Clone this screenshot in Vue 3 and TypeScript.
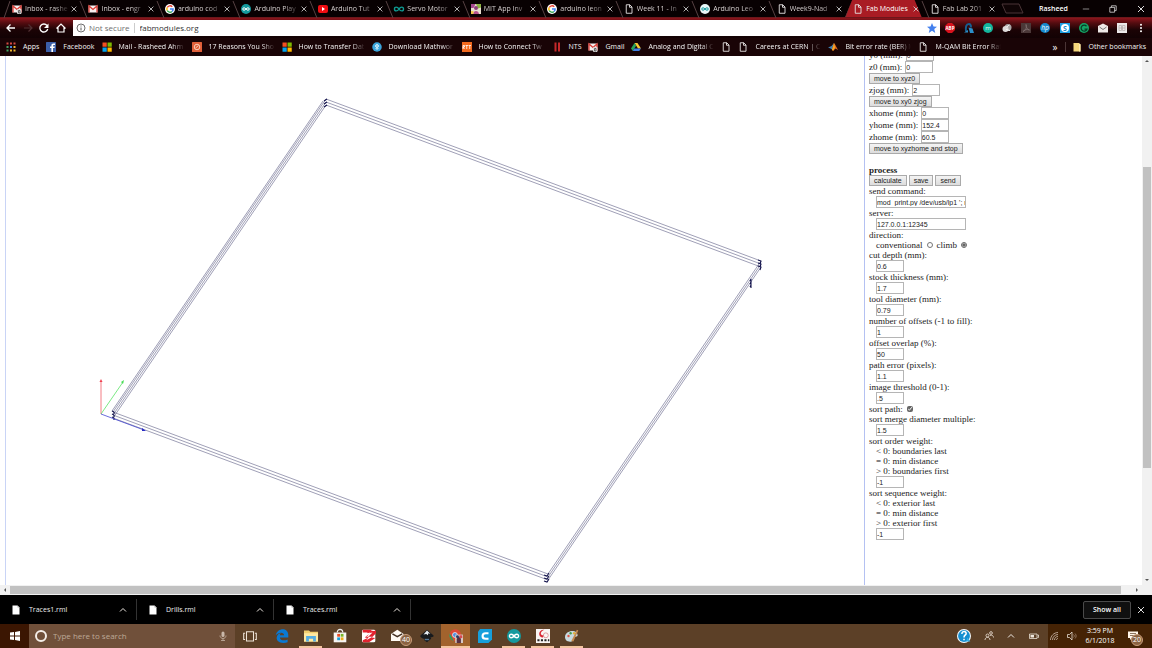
<script setup lang="ts">
import { ref } from 'vue'

interface Tab { icon: string; title: string; active?: boolean }
interface Bookmark { icon: string; label: string; clipped?: boolean }
interface Axis { id: string; label: string; value: string }
interface Setting { id: string; label: string; value: string; wide?: boolean }

const page = '<path d="M4.500 1.500h7l4.500 4.500v12.500h-11.500zM11 1.500v5h5" fill="none" stroke="#e8e4e4" stroke-width="1.800"/>'
const windowsTiles = '<path d="M1 1h8.500v8.500H1z" fill="#f25022"/><path d="M11 1h8.500v8.500H11z" fill="#7fba00"/><path d="M1 11h8.500v8.500H1z" fill="#00a4ef"/><path d="M11 11h8.500v8.500H11z" fill="#ffb900"/>'
const infinity = (c: string, w: number) => `<path d="M10 10C8 7 3.500 6.500 3.500 10S8 13 10 10s6.500-3.500 6.500 0S12 13 10 10z" fill="none" stroke="${c}" stroke-width="${w}"/>`
const envelope = '<path d="M1 3h18v14H1z" fill="#f4f0f0"/><path d="M2 17V4l8 7 8-7v13" fill="none" stroke="#d93c35" stroke-width="2.600"/>'

const icons: Record<string, string> = {
  page,
  windowsTiles,
  gmail: envelope,
  gmailBadge: envelope + '<rect x="10" y="10" width="9" height="10" rx="2" fill="#ddd"/><path d="M13 13h3v5h-3z" fill="none" stroke="#444" stroke-width="1.500"/>',
  google: '<circle cx="10" cy="10" r="10" fill="#fff"/><g fill="none" stroke-width="3"><path d="M14.500 5.500A6.300 6.300 0 0 0 4.500 7" stroke="#ea4335"/><path d="M4.500 7a6.300 6.300 0 0 0 0 6" stroke="#fbbc05"/><path d="M4.500 13a6.300 6.300 0 0 0 9.500 2" stroke="#34a853"/><path d="M14 15a6 6 0 0 0 2.200-5H10" stroke="#4285f4"/></g>',
  arduino: '<circle cx="10" cy="10" r="10" fill="#159a9e"/>' + infinity('#fff', 2),
  arduinoBare: '<path d="M10 10C7 5 1 5 1 10s6 5 9 0 9-5 9 0-6 5-9 0z" fill="none" stroke="#0f9b92" stroke-width="2.800"/>',
  arduinoLight: '<circle cx="10" cy="10" r="10" fill="#e8f7f8"/>' + infinity('#159a9e', 2),
  youtube: '<rect x="0" y="2" width="20" height="16" rx="4" fill="#f00d12"/><path d="M8 6l6 4-6 4z" fill="#fff"/>',
  mit: '<path d="M0 0h20v20H0z" fill="#e9dfd0"/><path d="M0 0h9l-4 8H0z" fill="#a64790"/><path d="M10 0h10v7l-6 2z" fill="#8bb440"/><circle cx="10" cy="8" r="4" fill="#8b3c7b"/><path d="M4 20c1-8 11-8 12 0z" fill="#b6528c"/><path d="M0 14h5v6H0z" fill="#efc94c"/>',
  apps: '<g fill="#d64b42"><path d="M1 1h4v4H1zM8 1h4v4H8zM15 1h4v4h-4z"/></g><g fill="#43a564"><path d="M1 8h4v4H1z"/></g><g fill="#4b87e0"><path d="M8 8h4v4H8z"/></g><g fill="#eeb62e"><path d="M15 8h4v4h-4zM8 15h4v4H8zM15 15h4v4h-4z"/></g><path d="M1 15h4v4H1z" fill="#43a564"/>',
  facebook: '<rect width="20" height="20" rx="1" fill="#3c5fa8"/><path d="M14 20v-8h3l.5-3H14V7.500c0-1 .5-1.500 1.700-1.500H18V3h-3c-3 0-4.200 1.700-4.200 4.200V9H8v3h2.800v8z" fill="#fff"/>',
  reasons: '<rect width="20" height="20" rx="1" fill="#e0603a"/><circle cx="10" cy="10" r="5.500" fill="none" stroke="#f9cbb5" stroke-width="2"/><path d="M7 12l6-5" stroke="#f9cbb5" stroke-width="2"/>',
  blueDot: '<circle cx="10" cy="10" r="9.500" fill="#3ba5dc"/><path d="M10 4v12M6 8l4-3 4 3-4 3zM7 14l3-3 3 3" fill="none" stroke="#e3f4fd" stroke-width="1.700"/>',
  rtt: '<rect width="20" height="20" fill="#f2691e"/><path d="M2 14V7h3v3H2l3 4M7 7h5M9.500 7v7M13 7h5M15.500 7v7" fill="none" stroke="#fff" stroke-width="1.600"/>',
  bars: '<path d="M5 1h4v18H5zM12 1h4v18h-4z" fill="#c6282b"/>',
  drive: '<path d="M7 2h6l7 11h-6z" fill="#f8c831"/><path d="M7 2l3.300 5.500L3.500 18 0 13z" fill="#27a35c"/><path d="M6.500 13H20l-3.500 5h-13z" fill="#3f7fe4"/>',
  matlab: '<path d="M0 11l7-3 5-6-4 13-3-2z" fill="#3e7fb2"/><path d="M12 2c3 3 5 9 8 14l-5-3-5 5-2-3z" fill="#e36a1b"/><path d="M12 2l2 9-4 7-2-3z" fill="#f4a62a"/>',
  abp: '<path d="M6 0h8l6 6v8l-6 6H6l-6-6V6z" fill="#d8121d"/><text x="10" y="13.500" font-size="9" font-weight="700" text-anchor="middle" fill="#fff">ABP</text>',
  bell: '<path d="M4 17C3 8 4 2 10 2c4 0 4 4 4 7" fill="none" stroke="#165f91" stroke-width="4"/><path d="M0 19h8v-5M9 9l8 2 3 9h-8z" fill="#2b8fc9"/>',
  mCircle: '<circle cx="10" cy="10" r="10" fill="#13b69d"/><text x="10" y="14" font-size="12" text-anchor="middle" fill="#e5fff8">m</text>',
  cloudy: '<circle cx="12" cy="9" r="7" fill="#aaa6a6"/><circle cx="7" cy="12" r="6" fill="#dedada"/><path d="M9 8l6-4M8 13l8 2" stroke="#f8f8f8" stroke-width="2"/>',
  pdf: '<rect width="20" height="20" fill="#4b3838"/><path d="M4 17c6-3 8-9 6-14 0 5 2 10 7 11-5-2-9-1-13 3z" fill="none" stroke="#827070" stroke-width="1.600"/>',
  hp: '<circle cx="10" cy="10" r="10" fill="#1689cc"/><text x="10" y="14" font-size="13" font-style="italic" text-anchor="middle" fill="#fff">hp</text>',
  skype: '<rect width="20" height="20" fill="#1b9fe3"/><circle cx="10" cy="10" r="8" fill="#fff"/><text x="10" y="15" font-size="14" font-weight="700" text-anchor="middle" fill="#168dcc">S</text>',
  grammarly: '<circle cx="10" cy="10" r="10" fill="#15a465"/><path d="M15 6.500A6 6 0 1 0 16 12h-5" fill="none" stroke="#063c26" stroke-width="2.500"/>',
  mailOpen: '<path d="M0 6l10-5 10 5v13H0z" fill="#eee9e7"/><path d="M3 8l7 5 7-5" fill="none" stroke="#777" stroke-width="2"/>',
  grid: '<rect width="20" height="20" fill="#ece9e9"/><path d="M4 5h5v10H4zM11 5h5v10h-5zM4 10h12" fill="none" stroke="#b7adad" stroke-width="1.500"/>',
  edge: '<path d="M1 9C3-2 19-3 19 9v3H7c0 5 7 5 11 3v4C8 22 0 17 3 10c1-3 4-4 6-4-2 1-2 2-2 3h6c0-5-8-5-12 0z" fill="#0a79d2"/>',
  explorer: '<path d="M0 2h7l2 2h11v14H0z" fill="#f3cf70"/><path d="M0 6h20v12H0z" fill="#ffe9a1"/><path d="M3 10h14v8h-4v-4H7v4H3z" fill="#58aee0"/>',
  store: '<path d="M6 5c0-6 8-6 8 0" fill="none" stroke="#eee" stroke-width="1.600"/><path d="M1 5h18v14H1z" fill="#f7f5f2"/><path d="M6 7h4v4H6z" fill="#e64c26"/><path d="M11 7h4v4h-4z" fill="#78b728"/><path d="M6 12h4v4H6z" fill="#179ed8"/><path d="M11 12h4v4h-4z" fill="#f2ad1c"/>',
  zapya: '<rect x="0" y="1" width="19" height="18" rx="2" fill="#fff"/><path d="M1 1h13l-3 4H1zM17 3l3-1v4l-6 6 5 1-9 6H1v-3l7-3-4-1 8-7-5 1 4-4z" fill="#e3232f"/><path d="M4 7l11-2-6 6 6 0-9 5 4-5H6l4-3-6 1z" fill="#fff"/>',
  mail: '<path d="M0 7l9-6 9 6v10H0z" fill="#fffaf3"/><path d="M2 7l7 4 7-4" fill="none" stroke="#443022" stroke-width="2"/>',
  inkscape: '<path d="M10 1l9 8c2 2-2 3-4 3l1 2-6 5-4-3 1-2c-4 0-8-3-6-5z" fill="#171a1d"/><path d="M10 2l5 5-3-1-1 3-2-2-4 1z" fill="#e8eef3"/><path d="M7 15l6 0" stroke="#55799a" stroke-width="2"/>',
  chrome: '<circle cx="9" cy="9" r="8.500" fill="#dc4938"/><path d="M1 6l6 11A8 8 0 0 1 1 6z" fill="#2f9e58"/><path d="M9 9h8c0 4-2 8-8 9z" fill="#f1c13e"/><circle cx="8.500" cy="8.500" r="3.500" fill="#4d8ee1" stroke="#fff"/><path d="M9 8h11v12H9z" fill="#d9c9c5"/><path d="M11 20v-6l3-4 3 4v6z" fill="#572f42"/><circle cx="12" cy="11" r="2" fill="#283b69"/><path d="M15 9h4v4h-4z" fill="#d84a50"/>',
  cura: '<path d="M3 0h17v15l-5 5H0V4z" fill="#169fdb"/><path d="M15 6h-4c-6 0-6 8 0 8h4" fill="none" stroke="#fff" stroke-width="3"/>',
  rings: '<path d="M0 0h20v20H0z" fill="#f9f5f3"/><path d="M12 1c-9-1-10 11-2 11l1-3C5 9 6 3 12 1z" fill="#d92935"/><circle cx="14" cy="9" r="3.500" fill="none" stroke="#d77780"/><path d="M2 16h3M7 16h3M12 16h3M17 16h2" stroke="#222" stroke-width="3"/>',
  paint: '<path d="M0 12c0-11 18-12 18-3 0 3-5 1-5 4 0 4-4 6-7 5-3 0-6-3-6-6z" fill="#c8dae0"/><circle cx="5" cy="10" r="1.700" fill="#d54"/><circle cx="8" cy="6" r="1.700" fill="#479b50"/><circle cx="13" cy="6" r="1.700" fill="#e1b33b"/><path d="M9 17L17 1l2 1-7 16z" fill="#c68b50"/>',
  help: '<circle cx="10" cy="10" r="10" fill="#f5fbff"/><circle cx="10" cy="10" r="8.500" fill="#168fd1"/><path d="M7 7c0-5 7-4 6 0-1 2-3 2-3 5M10 14v2" fill="none" stroke="#fff" stroke-width="2.200"/><path d="M15 12l4 6h-6z" fill="#35b0eb"/>',
  people: '<g fill="none" stroke="#e8ddd2" stroke-width="1.700"><circle cx="7" cy="9" r="3"/><path d="M2 18c0-7 10-7 10 0"/><circle cx="14" cy="4" r="2.700"/><path d="M12 9c3-2 7 0 7 4"/></g>',
  caret: '<path d="M4 13l6-6 6 6" fill="none" stroke="#eee8e2" stroke-width="2"/>',
  battery: '<path d="M1 6h15v9H1zM17 8h2v5h-2" fill="none" stroke="#f0e9df" stroke-width="1.500"/><path d="M3 8h7v5H3z" fill="#f0e9df"/>',
  wifi: '<g fill="none" stroke="#d9cabd" stroke-width="1.500"><path d="M3 18C3 10 10 3 18 3M7 18c0-6 5-11 11-11M11 18c0-4 3-7 7-7M15 18c0-2 1-3 3-3"/></g>',
  volume: '<path d="M1 7h4l5-5v16l-5-5H1z" fill="none" stroke="#f0e9df" stroke-width="1.500"/><path d="M13 7c2 2 2 4 0 6M16 5c3 3 3 7 0 10" fill="none" stroke="#b79f8b" stroke-width="1.300"/>',
  notice: '<path d="M0 1h20v13H8l-4 4v-4H0z" fill="#fff5e9"/><path d="M4 5h12M4 9h12" stroke="#684a32" stroke-width="1.500"/>',
  taskView: '<path d="M5 4h10v13H5zM3 6H1v9h2M17 6h2v9h-2" fill="none" stroke="#eee3d8" stroke-width="1.500"/>',
  mic: '<rect x="7" y="1" width="6" height="11" rx="3" fill="#c9b8aa"/><path d="M4 9c0 8 12 8 12 0M10 15v4M6 19h8" fill="none" stroke="#c9b8aa" stroke-width="1.500"/>',
  close: '<path d="M4 4l12 12M16 4L4 16" stroke="#ddd" stroke-width="2"/>',
  minimize: '<path d="M2 10h16" stroke="#ddd" stroke-width="1.500"/>',
  restore: '<path d="M2 6h12v12H2zM6 6V2h12v12h-4" fill="none" stroke="#eee" stroke-width="1.800"/>',
  back: '<path d="M18 10H3M9 3l-7 7 7 7" fill="none" stroke="#fff" stroke-width="2.600"/>',
  forward: '<path d="M2 10h15M11 3l7 7-7 7" fill="none" stroke="#513033" stroke-width="2.400"/>',
  reload: '<path d="M16 5a8 8 0 1 0 1.500 7" fill="none" stroke="#fff" stroke-width="2.600"/><path d="M19 1v9h-9z" fill="#fff"/>',
  home: '<path d="M1 11l9-9 9 9M4 9v9h12V9" fill="none" stroke="#fff" stroke-width="2.400"/>',
  info: '<circle cx="10" cy="10" r="8" fill="none" stroke="#5d5d5d" stroke-width="1.800"/><path d="M10 9v6M10 5v2" stroke="#5d5d5d" stroke-width="2"/>',
  star: '<path d="M10 0l3 7 7 .5-5.500 4.700L16.500 20 10 15.600 3.500 20l2-7.800L0 7.500 7 7z" fill="#4380ed"/>',
  dots: '<circle cx="10" cy="3.500" r="2" fill="#fff"/><circle cx="10" cy="10" r="2" fill="#fff"/><circle cx="10" cy="16.500" r="2" fill="#fff"/>',
  folder: '<path d="M3 2h11v3h3v14H3z" fill="#f5d77c"/><path d="M14 2l3 3v14h-3z" fill="#ffedaf"/>',
  file: '<path d="M3 1h10l4 4v14H3z" fill="#fff"/><path d="M13 1v4h4z" fill="#aaa"/>',
  start: '<path d="M0 3l8-1v7H0zM10 2l10-2v9H10zM0 11h8v7l-8-1zM10 11h10v9l-10-2z" fill="#fff"/>',
}

const tabs: Tab[] = [
  { icon: 'gmailBadge', title: 'Inbox - rashe' },
  { icon: 'gmail', title: 'Inbox - engr' },
  { icon: 'google', title: 'arduino cod' },
  { icon: 'arduino', title: 'Arduino Play' },
  { icon: 'youtube', title: 'Arduino Tut' },
  { icon: 'arduinoBare', title: 'Servo Motor' },
  { icon: 'mit', title: 'MIT App Inv' },
  { icon: 'google', title: 'arduino leon' },
  { icon: 'page', title: 'Week 11 - In' },
  { icon: 'arduinoLight', title: 'Arduino Leo' },
  { icon: 'page', title: 'Week9-Nad' },
  { icon: 'page', title: 'Fab Modules', active: true },
  { icon: 'page', title: 'Fab Lab 201' },
]

const bookmarks: Bookmark[] = [
  { icon: 'apps', label: 'Apps' },
  { icon: 'facebook', label: 'Facebook' },
  { icon: 'windowsTiles', label: 'Mail - Rasheed Ahm', clipped: true },
  { icon: 'reasons', label: '17 Reasons You Sho', clipped: true },
  { icon: 'windowsTiles', label: 'How to Transfer Dat', clipped: true },
  { icon: 'blueDot', label: 'Download Mathwor', clipped: true },
  { icon: 'rtt', label: 'How to Connect Tw', clipped: true },
  { icon: 'bars', label: 'NTS' },
  { icon: 'gmailBadge', label: 'Gmail' },
  { icon: 'drive', label: 'Analog and Digital C', clipped: true },
  { icon: 'page', label: '' },
  { icon: 'page', label: 'Careers at CERN | C', clipped: true },
  { icon: 'matlab', label: 'Bit error rate (BER) M', clipped: true },
  { icon: 'page', label: 'M-QAM Bit Error Rat', clipped: true },
]

const extensions = ['abp', 'bell', 'mCircle', 'cloudy', 'pdf', 'hp', 'skype', 'grammarly', 'mailOpen', 'grid', 'dots']

const zero = ref<Axis[]>([
  { id: 'y0', label: 'y0 (mm):', value: '0' },
  { id: 'z0', label: 'z0 (mm):', value: '0' },
])
const jog = ref<Axis[]>([{ id: 'zjog', label: 'zjog (mm):', value: '2' }])
const home = ref<Axis[]>([
  { id: 'xhome', label: 'xhome (mm):', value: '0' },
  { id: 'yhome', label: 'yhome (mm):', value: '152.4' },
  { id: 'zhome', label: 'zhome (mm):', value: '60.5' },
])
const moves = [
  { fields: zero, action: 'move to xyz0' },
  { fields: jog, action: 'move to xy0 zjog' },
  { fields: home, action: 'move to xyzhome and stop' },
]

const connection = ref<Setting[]>([
  { id: 'command', label: 'send command:', value: "mod_print.py /dev/usb/lp1 '; rm", wide: true },
  { id: 'server', label: 'server:', value: '127.0.0.1:12345', wide: true },
])
const direction = ref('climb')
const settings = ref<Setting[]>([
  { id: 'depth', label: 'cut depth (mm):', value: '0.6' },
  { id: 'thickness', label: 'stock thickness (mm):', value: '1.7' },
  { id: 'diameter', label: 'tool diameter (mm):', value: '0.79' },
  { id: 'offsets', label: 'number of offsets (-1 to fill):', value: '1' },
  { id: 'overlap', label: 'offset overlap (%):', value: '50' },
  { id: 'error', label: 'path error (pixels):', value: '1.1' },
  { id: 'threshold', label: 'image threshold (0-1):', value: '.5' },
])
const sortPath = ref(true)
const merge = ref('1.5')
const weights = ref([
  { id: 'order', label: 'sort order weight:', notes: ['< 0: boundaries last', '= 0: min distance', '> 0: boundaries first'], value: '-1' },
  { id: 'sequence', label: 'sort sequence weight:', notes: ['< 0: exterior last', '= 0: min distance', '> 0: exterior first'], value: '-1' },
])

const passes = [0, 3, 6]
const downloads = ['Traces1.rml', 'Drills.rml', 'Traces.rml']
const search = ref('')
const apps = [
  { icon: 'taskView', name: 'Task View' },
  { icon: 'edge', name: 'Edge' },
  { icon: 'explorer', name: 'File Explorer', state: 'open' },
  { icon: 'store', name: 'Store' },
  { icon: 'zapya', name: 'Zapya' },
  { icon: 'mail', name: 'Mail', badge: '40' },
  { icon: 'inkscape', name: 'Inkscape' },
  { icon: 'chrome', name: 'Chrome', state: 'open current' },
  { icon: 'cura', name: 'Cura' },
  { icon: 'arduino', name: 'Arduino', state: 'open' },
  { icon: 'rings', name: 'Design tool', state: 'open' },
  { icon: 'paint', name: 'Paint', state: 'open' },
]
</script>

<template>
  <div class="desktop">
    <header class="browser">
      <div class="strip">
        <nav class="tabs">
          <div v-for="(t, i) in tabs" :key="i" class="tab" :class="{ active: t.active }">
            <svg class="edge-line" viewBox="0 0 8 18" aria-hidden="true">
              <path :d="i === 0 || t.active ? 'M0 18L6 1' : 'M0 1L7 18'" />
            </svg>
            <svg class="icon" viewBox="0 0 20 20" v-html="icons[t.icon]"></svg>
            <a class="tab-title" href="#">{{ t.title }}</a>
            <button class="bare" aria-label="Close tab"><svg class="small" viewBox="0 0 20 20" v-html="icons.close"></svg></button>
          </div>
        </nav>
        <div class="window-tools">
          <button class="bare" aria-label="New tab">
            <svg class="new-tab" viewBox="0 0 24 11"><path d="M1 1h17l4 9H5z" fill="#100506" stroke="#4a3537" /></svg>
          </button>
          <span class="user">Rasheed</span>
          <button class="bare" aria-label="Minimize"><svg class="small" viewBox="0 0 20 20" v-html="icons.minimize"></svg></button>
          <button class="bare" aria-label="Restore"><svg class="small" viewBox="0 0 20 20" v-html="icons.restore"></svg></button>
          <button class="bare" aria-label="Close"><svg class="icon" viewBox="0 0 20 20" v-html="icons.close"></svg></button>
        </div>
      </div>

      <div class="toolbar">
        <div class="nav">
          <button v-for="n in ['back', 'forward', 'reload', 'home']" :key="n" class="bare" :aria-label="n">
            <svg class="icon" viewBox="0 0 20 20" v-html="icons[n]"></svg>
          </button>
        </div>
        <div class="omnibox">
          <svg class="icon" viewBox="0 0 20 20" v-html="icons.info"></svg>
          <span class="secure">Not secure</span>
          <input class="address" aria-label="Address" value="fabmodules.org" />
          <svg class="icon" viewBox="0 0 20 20" v-html="icons.star"></svg>
        </div>
        <div class="extensions">
          <button v-for="e in extensions" :key="e" class="bare" :aria-label="e">
            <svg class="icon" viewBox="0 0 20 20" v-html="icons[e]"></svg>
          </button>
        </div>
      </div>

      <nav class="bookmarks">
        <a v-for="(b, i) in bookmarks" :key="i" href="#" class="bookmark">
          <svg class="icon" viewBox="0 0 20 20" v-html="icons[b.icon]"></svg>
          <span v-if="b.label" :class="{ clipped: b.clipped }">{{ b.label }}</span>
        </a>
        <span class="more">»</span>
        <a href="#" class="bookmark other">
          <svg class="icon" viewBox="0 0 20 20" v-html="icons.folder"></svg>
          <span>Other bookmarks</span>
        </a>
      </nav>
    </header>

    <main class="page">
      <section class="canvas">
        <svg viewBox="6 56 858 529" preserveAspectRatio="xMinYMin meet" class="drawing">
          <g fill="none" stroke="#3f3f6c" stroke-width="0.500">
            <path v-for="p in passes" :key="p" :d="`M326 ${99 + p}L761 ${261 + p}L548 ${574 + p}L113 ${412 + p}Z`" />
            <path d="M323 101L112 411" />
          </g>
          <g fill="none" stroke="#15154d" stroke-width="1.100">
            <path v-for="p in passes" :key="p" :d="`M324 ${101 + p}l3-2M758 ${260 + p}l3 1-1 3M549 ${573 + p}l-2 3-3-1M112 ${411 + p}l2 1 0 2M750 ${281 + p}l1-2v3`" />
          </g>
          <g fill="none" stroke-width="0.800">
            <path d="M101 414V381" stroke="#f05a66" />
            <path d="M101 414L123 382" stroke="#5be366" />
            <path d="M101 414L144 430" stroke="#4446d2" />
          </g>
          <path d="M99.500 382l1.500-3 1.500 3z" fill="#ef4050" />
          <path d="M121 382l3-2-1 4z" fill="#48dc55" />
          <path d="M142 428l4 3-4 0z" fill="#292bc4" />
        </svg>
      </section>

      <aside class="panel">
        <form class="controls" @submit.prevent>
          <template v-for="m in moves" :key="m.action">
            <div v-for="f in m.fields.value" :key="f.id" class="row">
              <label :for="f.id">{{ f.label }}</label>
              <input :id="f.id" v-model="f.value" class="field" />
            </div>
            <div class="actions"><button type="button" class="push">{{ m.action }}</button></div>
          </template>

          <h2 class="heading">process</h2>
          <div class="actions">
            <button type="button" class="push">calculate</button>
            <button type="button" class="push">save</button>
            <button type="button" class="push">send</button>
          </div>

          <div v-for="s in connection" :key="s.id" class="setting">
            <label :for="s.id">{{ s.label }}</label>
            <input :id="s.id" v-model="s.value" class="field wide" />
          </div>
          <fieldset class="choice">
            <legend>direction:</legend>
            <div class="options">
              <label for="conventional">conventional</label>
              <input id="conventional" v-model="direction" type="radio" name="direction" value="conventional" />
              <label for="climb">climb</label>
              <input id="climb" v-model="direction" type="radio" name="direction" value="climb" />
            </div>
          </fieldset>
          <div v-for="s in settings" :key="s.id" class="setting">
            <label :for="s.id">{{ s.label }}</label>
            <input :id="s.id" v-model="s.value" class="field" />
          </div>
          <div class="check-row">
            <label for="sort">sort path:</label>
            <input id="sort" v-model="sortPath" type="checkbox" />
          </div>
          <div class="setting">
            <label for="merge">sort merge diameter multiple:</label>
            <input id="merge" v-model="merge" class="field" />
          </div>
          <div v-for="w in weights" :key="w.id" class="setting">
            <label :for="w.id">{{ w.label }}</label>
            <span v-for="n in w.notes" :key="n" class="note">{{ n }}</span>
            <input :id="w.id" v-model="w.value" class="field" />
          </div>
        </form>
      </aside>

      <div class="vbar" aria-hidden="true">
        <svg class="arrow" viewBox="0 0 10 10"><path d="M3 6l2-2 2 2z" /></svg>
        <div class="vtrack"><div class="vthumb"></div></div>
        <svg class="arrow" viewBox="0 0 10 10"><path d="M3 4l2 2 2-2z" /></svg>
      </div>
    </main>
    <div class="hbar" aria-hidden="true">
      <svg class="arrow" viewBox="0 0 10 10"><path d="M6 3L4 5l2 2z" /></svg>
      <div class="htrack"><div class="hthumb"></div></div>
      <svg class="arrow" viewBox="0 0 10 10"><path d="M4 3l2 2-2 2z" /></svg>
    </div>

    <section class="downloads">
      <div v-for="d in downloads" :key="d" class="download">
        <svg class="icon" viewBox="0 0 20 20" v-html="icons.file"></svg>
        <a href="#">{{ d }}</a>
        <button class="bare" aria-label="Download options"><svg class="icon" viewBox="0 0 20 20" v-html="icons.caret"></svg></button>
      </div>
      <button class="show-all">Show all</button>
      <button class="bare" aria-label="Close downloads"><svg class="icon" viewBox="0 0 20 20" v-html="icons.close"></svg></button>
    </section>

    <footer class="taskbar">
      <button class="bare start" aria-label="Start"><svg class="icon" viewBox="0 0 20 20" v-html="icons.start"></svg></button>
      <div class="search">
        <span class="cortana"></span>
        <input v-model="search" aria-label="Search" placeholder="Type here to search" />
        <svg class="icon" viewBox="0 0 20 20" v-html="icons.mic"></svg>
      </div>
      <div class="apps">
        <button v-for="a in apps" :key="a.name" class="bare app" :class="a.state" :aria-label="a.name">
          <svg class="app-icon" viewBox="0 0 20 20" v-html="icons[a.icon]"></svg>
          <span v-if="a.badge" class="badge">{{ a.badge }}</span>
        </button>
      </div>
      <div class="tray">
        <button v-for="t in ['help', 'people', 'caret', 'battery']" :key="t" class="bare" :aria-label="t">
          <svg :class="t === 'help' ? 'app-icon' : 'icon'" viewBox="0 0 20 20" v-html="icons[t]"></svg>
        </button>
      </div>
      <div class="status">
        <svg class="icon" viewBox="0 0 20 20" v-html="icons.wifi"></svg>
        <svg class="icon" viewBox="0 0 20 20" v-html="icons.volume"></svg>
        <div class="clock"><span>3:59 PM</span><span>6/1/2018</span></div>
        <button class="bare notices" aria-label="Notifications">
          <svg class="icon" viewBox="0 0 20 20" v-html="icons.notice"></svg>
          <span class="badge">20</span>
        </button>
      </div>
    </footer>
  </div>
</template>

<style>
body { margin: 0; }
</style>

<style scoped>
.desktop { display: flex; flex-direction: column; height: 100vh; overflow: hidden; background: #fff; color: #eee; font-family: "Open Sans", "Noto Sans", sans-serif; font-size: 7px; line-height: 10px; }
.desktop *, .desktop *::before { box-sizing: border-box; }
a { color: inherit; text-decoration: none; }
svg { display: block; flex: none; overflow: visible; }
.icon { width: 10px; height: 10px; }
.small { width: 8px; height: 8px; }
.app-icon { width: 14px; height: 14px; }
.bare { display: flex; align-items: center; justify-content: center; flex: none; padding: 0; border: 0; background: none; color: inherit; font: inherit; }

.browser { flex: none; background: #160305; }
.strip { display: flex; height: 18px; background: #080102; border-bottom: 1px solid #6d171b; }
.tabs { display: flex; flex: 1; min-width: 0; padding-left: 4px; }
.tab { position: relative; display: flex; flex: 1; align-items: center; min-width: 0; padding: 1px 2px 0 8px; color: #d6d0d0; }
.tab > .icon { margin-right: 3px; }
.tab.active { background: #a91c24; color: #fff; clip-path: polygon(0 100%, 7px 0, calc(100% - 7px) 0, 100% 100%); }
.edge-line { position: absolute; left: 0; top: 0; width: 8px; height: 18px; fill: none; stroke: #574143; }
.tab-title { flex: 1; min-width: 0; white-space: nowrap; mask-image: linear-gradient(90deg, #000 65%, transparent); }
.tab.active .tab-title { mask-image: none; }
.window-tools { display: flex; align-items: center; gap: 14px; flex: none; width: 154px; padding-left: 3px; }
.window-tools .small { margin-right: 5px; }
.new-tab { width: 24px; height: 11px; }
.user { color: #fff; font-weight: 600; }

.toolbar { display: flex; align-items: center; height: 20px; background: linear-gradient(#8c151c, #540c10 5px, #1b0305 12px, #120204); }
.nav { display: flex; flex: none; justify-content: space-between; width: 73px; padding: 0 7px 0 6px; }
.omnibox { display: flex; flex: 1; align-items: center; min-width: 0; height: 16px; padding: 0 3px; background: #fff; color: #707070; font-size: 8px; }
.secure { padding: 0 4px 0 3px; border-right: 1px solid #ccc; }
.address { flex: 1; min-width: 0; padding: 0 0 0 5px; border: 0; outline: 0; background: none; color: #333; font: inherit; }
.extensions { display: flex; flex: none; justify-content: space-between; width: 212px; padding: 0 6px 0 5px; }

.bookmarks { display: flex; align-items: center; gap: 7px; height: 18px; padding: 0 6px; background: #190406; color: #f4f4f4; }
.bookmark { display: flex; align-items: center; flex: none; gap: 7px; white-space: nowrap; }
.clipped { width: 66px; mask-image: linear-gradient(90deg, #000 80%, transparent); }
.more { margin-left: auto; font-size: 10px; }
.other { padding-left: 6px; border-left: 1px solid #4b3536; }

.page { display: grid; grid-template-columns: minmax(0, 1fr) 278px 10px; flex: 1; min-height: 0; overflow: hidden; }
.canvas { margin-left: 5px; border-left: 1px solid #c9d4f6; overflow: hidden; }
.drawing { width: 100%; }
.panel { border-left: 1px solid #b4c1f2; overflow: hidden; color: #222; font-family: "Liberation Serif", serif; font-size: 9px; }
.controls { margin: -7px 0 0 4px; }
.row { display: flex; align-items: center; gap: 3px; height: 12px; }
.actions { display: flex; gap: 2px; height: 11px; }
.field { display: block; width: 28px; height: 12px; padding: 0; border: 1px solid #b5b5b5; background: #fff; color: #222; font: 7px/10px "Liberation Sans", sans-serif; }
.field.wide { width: 90px; }
.push { height: 11px; padding: 0 4px; border: 1px solid #aaa; background: linear-gradient(#f4f4f4, #dcdcdc); color: #222; font: 7px/9px "Liberation Sans", sans-serif; }
.heading { margin: 11px 0 0; font-size: 9px; line-height: 10px; }
.setting label, .note { display: block; height: 10px; white-space: nowrap; }
.note { margin-left: 7px; }
.setting .field { margin-left: 7px; }
.choice { margin: 0; padding: 0; border: 0; }
.choice legend { height: 10px; padding: 0; }
.options { display: flex; align-items: center; gap: 4px; height: 10px; padding-left: 7px; }
.check-row { display: flex; align-items: center; gap: 4px; height: 10px; }
.options input, .check-row input { width: 6px; height: 6px; margin: 0; accent-color: #666; }

.vbar { display: flex; flex-direction: column; background: #f1f1f1; }
.arrow { width: 10px; height: 10px; fill: #555; }
.vtrack { display: flex; flex: 1; flex-direction: column; }
.vtrack::before { content: ""; flex: 101; }
.vtrack::after { content: ""; flex: 107; }
.vthumb { flex: 301; margin: 0 1px; background: #c1c1c1; }
.hbar { display: flex; flex: none; height: 10px; padding-right: 10px; background: #f1f1f1; }
.htrack { display: flex; flex: 1; }
.htrack::after { content: ""; flex: 11; }
.hthumb { flex: 1111; margin: 1px 0; background: #c1c1c1; }

.downloads { display: flex; align-items: center; flex: none; height: 29px; padding-right: 6px; background: #000; }
.download { display: flex; align-items: center; width: 137px; height: 21px; padding: 0 8px 0 11px; border-right: 1px solid #333; }
.download a { flex: 1; margin-left: 8px; }
.show-all { height: 18px; margin: 0 5px 0 auto; padding: 0 9px; border: 1px solid #4a4a4a; border-radius: 2px; background: #101010; color: #fff; font: 600 7px/10px "Open Sans", sans-serif; }

.taskbar { display: flex; flex: none; height: 24px; background: #5c4027; }
.start { width: 29px; background: #3b1602; }
.search { display: flex; align-items: center; width: 206px; padding: 0 7px 0 6px; background: #70503a; }
.cortana { flex: none; width: 12px; height: 12px; border: 2px solid #f4eee8; border-radius: 50%; }
.search input { flex: 1; min-width: 0; padding: 0 6px; border: 0; outline: 0; background: none; color: #ddd; font: 8px/12px "Open Sans", sans-serif; }
.search input::placeholder { color: #bda998; opacity: 1; }
.apps { display: flex; flex: none; }
.app { position: relative; width: 29px; height: 24px; }
.app:first-child { margin-right: 3px; }
.app.open::after { content: ""; position: absolute; left: 3px; right: 3px; bottom: 0; height: 2px; background: #f4c5a0; }
.app.current { background: #a2632d; }
.app.current::after { left: 0; right: 0; }
.badge { display: grid; place-items: center; position: absolute; right: 0; bottom: 2px; width: 12px; height: 12px; border: 1px solid #c99f7c; border-radius: 50%; background: #8a6242; color: #fff; line-height: 10px; }
.tray { display: flex; align-items: center; justify-content: space-between; width: 82px; margin-left: auto; }
.status { display: flex; align-items: center; gap: 8px; width: 104px; margin-left: 9px; padding: 0 9px 0 1px; background: #452305; }
.clock { display: flex; flex: 1; flex-direction: column; align-items: center; color: #fff; }
.notices { position: relative; width: 20px; height: 24px; }
</style>
